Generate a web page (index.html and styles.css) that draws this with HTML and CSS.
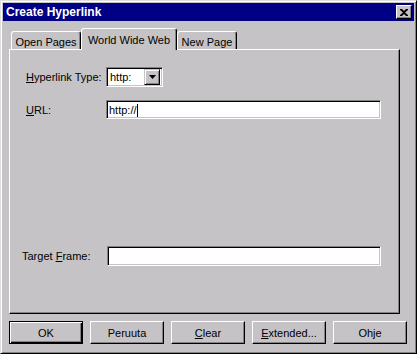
FILE: index.html
```html
<!DOCTYPE html>
<html lang="en">
<head>
    <meta charset="UTF-8">
    <title>Create Hyperlink</title>
    <link rel="stylesheet" href="styles.css">
</head>
<body>
    <div class="window">
        <div class="titlebar">
            <span class="title">Create Hyperlink</span>
            <div class="close-btn">
                <svg width="8" height="7" viewBox="0 0 8 7">
                    <path d="M0 0h2l2 2 2-2h2v1L5 3.5 8 6v1H6L4 5 2 7H0V6l3-2.5L0 1z" fill="#000"/>
                </svg>
            </div>
        </div>

        <div class="content">
            <div class="tabs">
                <div class="tab tab-open">Open Pages</div>
                <div class="tab tab-www active">World Wide Web</div>
                <div class="tab tab-new">New Page</div>
            </div>

            <div class="panel">
                <div class="row">
                    <label class="label"><u>H</u>yperlink Type:</label>
                    <div class="select">
                        <span class="select-text">http:</span>
                        <div class="drop-btn">
                            <svg width="7" height="4" viewBox="0 0 7 4"><path d="M0 0h7L3.5 4z" fill="#000"/></svg>
                        </div>
                    </div>
                </div>
                <div class="row row-url">
                    <label class="label"><u>U</u>RL:</label>
                    <div class="field">http://<span class="caret"></span></div>
                </div>
                <div class="row row-target">
                    <label class="label label-target">Target <u>F</u>rame:</label>
                    <div class="field field-target">&nbsp;</div>
                </div>
            </div>

            <div class="buttons">
                <div class="btn btn-default">OK</div>
                <div class="btn">Peruuta</div>
                <div class="btn"><u>C</u>lear</div>
                <div class="btn"><u>E</u>xtended...</div>
                <div class="btn">Ohje</div>
            </div>
        </div>
    </div>
</body>
</html>
```

FILE: styles.css
```css
* {
    box-sizing: border-box;
}
body {
    margin: 0;
    font-family: "Liberation Sans", Arial, sans-serif;
    font-size: 11px;
    color: #000;
    background-color: #fff;
}
.window {
    width: 417px;
    height: 354px;
    background-color: #c6c3c6;
    border: 1px solid;
    border-color: #dfdfdf #000 #000 #dfdfdf;
    box-shadow: inset 1px 1px #fff, inset -1px -1px #848284;
    padding: 2px;
}
.titlebar {
    height: 18px;
    background-color: #000084;
    display: flex;
    align-items: center;
    padding-left: 3px;
}
.title {
    color: #fff;
    font-weight: bold;
    font-size: 12px;
}
.close-btn {
    margin-left: auto;
    margin-right: 2px;
    width: 16px;
    height: 14px;
    background-color: #c6c3c6;
    border: 1px solid;
    border-color: #fff #000 #000 #fff;
    box-shadow: inset -1px -1px #848284;
    display: flex;
    align-items: center;
    justify-content: center;
    padding-right: 1px;
}
.close-btn svg {
    display: block;
}
.content {
    padding: 0 6px;
}
.tabs {
    margin-top: 7px;
    height: 21px;
    display: flex;
    align-items: flex-end;
    padding-left: 2px;
}
.tab {
    height: 18px;
    border: 1px solid;
    border-bottom: none;
    border-color: #fff #000 #000 #fff;
    border-radius: 3px 3px 0 0;
    box-shadow: inset -1px 0 #848284;
    display: flex;
    align-items: center;
    justify-content: center;
    padding-top: 3px;
    background-color: #c6c3c6;
}
.tab-open {
    width: 70px;
}
.tab-www {
    width: 96px;
}
.tab-new {
    width: 60px;
}
.tab.active {
    height: 22px;
    margin-bottom: -1px;
    position: relative;
    z-index: 1;
    padding-top: 0;
}
.panel {
    width: 391px;
    height: 265px;
    border: 1px solid;
    border-color: #fff #000 #000 #fff;
    box-shadow: inset -1px -1px #848284;
    padding: 17px 0 0 16px;
}
.row {
    display: flex;
    align-items: baseline;
}
.label {
    width: 80px;
}
.label u, .btn u {
    text-decoration-thickness: 1px;
    text-underline-offset: 1px;
}
.select {
    width: 57px;
    height: 20px;
    background-color: #fff;
    border: 1px solid;
    border-color: #848284 #fff #fff #848284;
    box-shadow: inset 1px 1px #000, inset -1px -1px #c6c3c6;
    display: flex;
    align-items: center;
    padding: 2px 2px 2px 3px;
}
.select-text {
    flex: 1;
}
.drop-btn {
    width: 16px;
    height: 16px;
    background-color: #c6c3c6;
    border: 1px solid;
    border-color: #c6c3c6 #000 #000 #c6c3c6;
    box-shadow: inset 1px 1px #fff, inset -1px -1px #848284;
    display: flex;
    align-items: center;
    justify-content: center;
}
.drop-btn svg {
    display: block;
}
.field {
    width: 275px;
    height: 19px;
    background-color: #fff;
    border: 1px solid;
    border-color: #848284 #fff #fff #848284;
    box-shadow: inset 1px 1px #000, inset -1px -1px #c6c3c6;
    padding: 3px 0 0 2px;
}
.caret {
    display: inline-block;
    width: 1px;
    height: 13px;
    background-color: #000;
    vertical-align: -3px;
}
.row-url {
    margin-top: 13px;
}
.row-target {
    margin-top: 127px;
}
.label-target {
    margin-left: -4px;
    width: 85px;
}
.field-target {
    width: 274px;
    height: 20px;
}
.buttons {
    display: flex;
    gap: 7px;
    margin-top: 7px;
}
.btn {
    width: 74px;
    height: 23px;
    border: 1px solid;
    border-color: #fff #000 #000 #fff;
    box-shadow: inset -1px -1px #848284;
    display: flex;
    align-items: center;
    justify-content: center;
}
.btn-default {
    border-color: #000;
    box-shadow: inset 1px 1px #fff, inset -1px -1px #000, inset -2px -2px #848284;
}
```
